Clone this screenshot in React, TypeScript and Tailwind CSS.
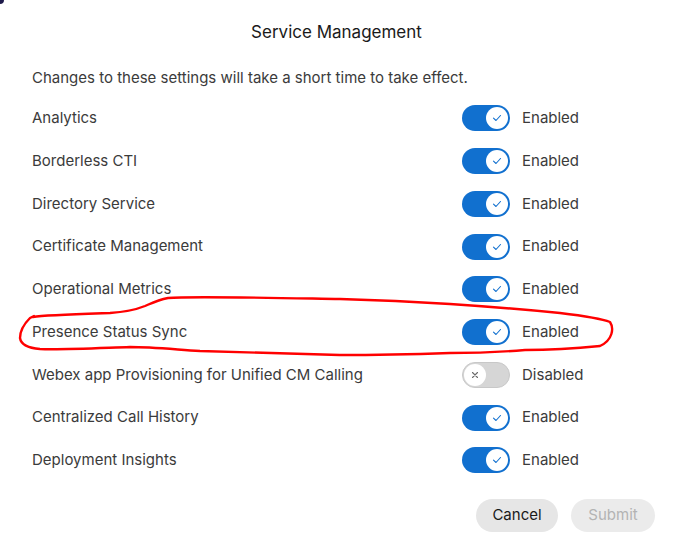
import React from 'react';

type Service = { name: string; enabled: boolean };

const services: Service[] = [
    { name: 'Analytics', enabled: true },
    { name: 'Borderless CTI', enabled: true },
    { name: 'Directory Service', enabled: true },
    { name: 'Certificate Management', enabled: true },
    { name: 'Operational Metrics', enabled: true },
    { name: 'Presence Status Sync', enabled: true },
    { name: 'Webex app Provisioning for Unified CM Calling', enabled: false },
    { name: 'Centralized Call History', enabled: true },
    { name: 'Deployment Insights', enabled: true },
];

const Toggle: React.FC<{ on: boolean }> = ({ on }) => {
    if (on) {
        return (
            <div className="w-[48px] h-[26px] rounded-full bg-[#1170cf] flex items-center justify-end px-[2px]">
                <div className="w-[22px] h-[22px] rounded-full bg-white flex items-center justify-center">
                    <svg width="10" height="8" viewBox="0 0 10 8" fill="none">
                        <path d="M1.5 4.2 L4 6.5 L8.5 1.5" stroke="#1170cf" strokeWidth="1.1" strokeLinecap="round" strokeLinejoin="round" />
                    </svg>
                </div>
            </div>
        );
    }
    return (
        <div className="w-[48px] h-[26px] rounded-full bg-[#d6d6d6] border border-[#c8c8c8] flex items-center justify-start px-[1px]">
            <div className="w-[22px] h-[22px] rounded-full bg-white flex items-center justify-center">
                <svg width="8" height="8" viewBox="0 0 8 8" fill="none">
                    <path d="M1.5 1.5 L6.5 6.5 M6.5 1.5 L1.5 6.5" stroke="#6b6b6b" strokeWidth="1.1" strokeLinecap="round" />
                </svg>
            </div>
        </div>
    );
};

export default function App() {
    return (
        <div className="relative w-[673px] h-[535px] bg-white overflow-hidden font-['Inter',sans-serif] text-[#3b3b3b]">
            {/* dark corner of the window behind */}
            <div className="absolute top-0 left-0 w-[4px] h-[4px] rounded-br-full bg-[#1e1b4b]" />

            <h2 className="pt-[21px] h-[67px] text-center text-[17px] leading-[22px] text-[#1a1a1a]">
                Service Management
            </h2>

            <p className="pl-[32px] h-[30px] text-[15px] leading-[22px]">
                Changes to these settings will take a short time to take effect.
            </p>

            <div className="flex flex-col">
                {services.map((s) => (
                    <div key={s.name} className="flex items-center h-[42.75px]">
                        <div className="w-[462px] pl-[32px] text-[15px]">{s.name}</div>
                        <Toggle on={s.enabled} />
                        <div className="ml-[12px] text-[15px]">{s.enabled ? 'Enabled' : 'Disabled'}</div>
                    </div>
                ))}
            </div>

            <div className="flex justify-end gap-[13px] pr-[18px] mt-[17px]">
                <button className="w-[82px] h-[33px] rounded-full bg-[#e6e6e6] text-[15px] text-[#1a1a1a]">
                    Cancel
                </button>
                <button className="w-[84px] h-[33px] rounded-full bg-[#ebebeb] text-[15px] text-[#b3b3b3]">
                    Submit
                </button>
            </div>

            {/* hand-drawn annotation */}
            <svg className="absolute inset-0 pointer-events-none" width="673" height="535" viewBox="0 0 673 535" fill="none">
                <path
                    d="M33 317 C45 315 80 314 110 313 C125 312 135 310 145 306 C152 303 158 300 168 298 C190 296 280 298 340 299 C380 300 420 302 450 304 C480 306 520 309 560 313 C585 316 600 318 610 322 C614 328 613 340 600 346 C570 349 540 350 525 350 C500 352 470 353 450 353 C420 354 380 355 340 355 C290 354 240 352 200 351 C170 349 150 347 130 347 C100 348 60 350 40 349 C28 348 21 345 20 338 C20 330 24 324 30 318 L34 316"
                    stroke="#ff0000"
                    strokeWidth="2.4"
                    strokeLinecap="round"
                    strokeLinejoin="round"
                />
            </svg>
        </div>
    );
}
